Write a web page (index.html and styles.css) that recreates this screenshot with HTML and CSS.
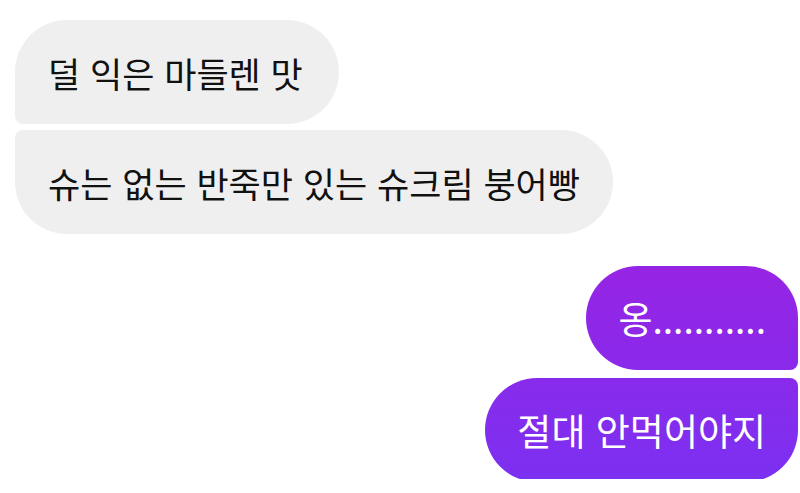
FILE: index.html
```html
<!DOCTYPE html>
<html lang="ko">
<head>
    <meta charset="UTF-8">
    <meta name="viewport" content="width=device-width, initial-scale=1.0">
    <title>chat</title>
    <link rel="stylesheet" href="styles.css">
</head>
<body>
    <div class="chat">
        <div class="group them">
            <div class="bubble first">덜 익은 마들렌 맛</div>
            <div class="bubble last">슈는 없는 반죽만 있는 슈크림 붕어빵</div>
        </div>
        <div class="group me">
            <div class="bubble first">옹...........</div>
            <div class="bubble last">절대 안먹어야지</div>
        </div>
    </div>
</body>
</html>
```

FILE: styles.css
```css
body {
    margin: 0;
    background: #ffffff;
    font-family: "Noto Sans CJK KR", "Noto Sans", sans-serif;
}
.chat {
    display: flex;
    flex-direction: column;
    gap: 32px;
    padding: 20px 2px 0 15px;
}
.group {
    display: flex;
    flex-direction: column;
    gap: 6px;
}
.bubble {
    display: flex;
    align-items: center;
    height: 104px;
    box-sizing: border-box;
    padding: 0 33px;
    border-radius: 52px;
    font-size: 35px;
    white-space: nowrap;
}
.them {
    align-items: flex-start;
}
.them .bubble {
    background: #efefef;
    color: #111111;
}
.them .first {
    border-bottom-left-radius: 8px;
    padding-right: 36px;
}
.them .last {
    border-top-left-radius: 8px;
}
.me {
    align-items: flex-end;
    gap: 8px;
}
/* one gradient running down the whole outgoing group */
.me .bubble {
    color: #ffffff;
    font-size: 37px;
    padding: 0 32px;
    background: linear-gradient(180deg, #9724e4 0%, #7c30f1 100%) fixed no-repeat;
    background-size: 800px 216px;
    background-position: 0 263px;
}
.me .first {
    border-bottom-right-radius: 8px;
}
.me .last {
    border-top-right-radius: 8px;
}
```
